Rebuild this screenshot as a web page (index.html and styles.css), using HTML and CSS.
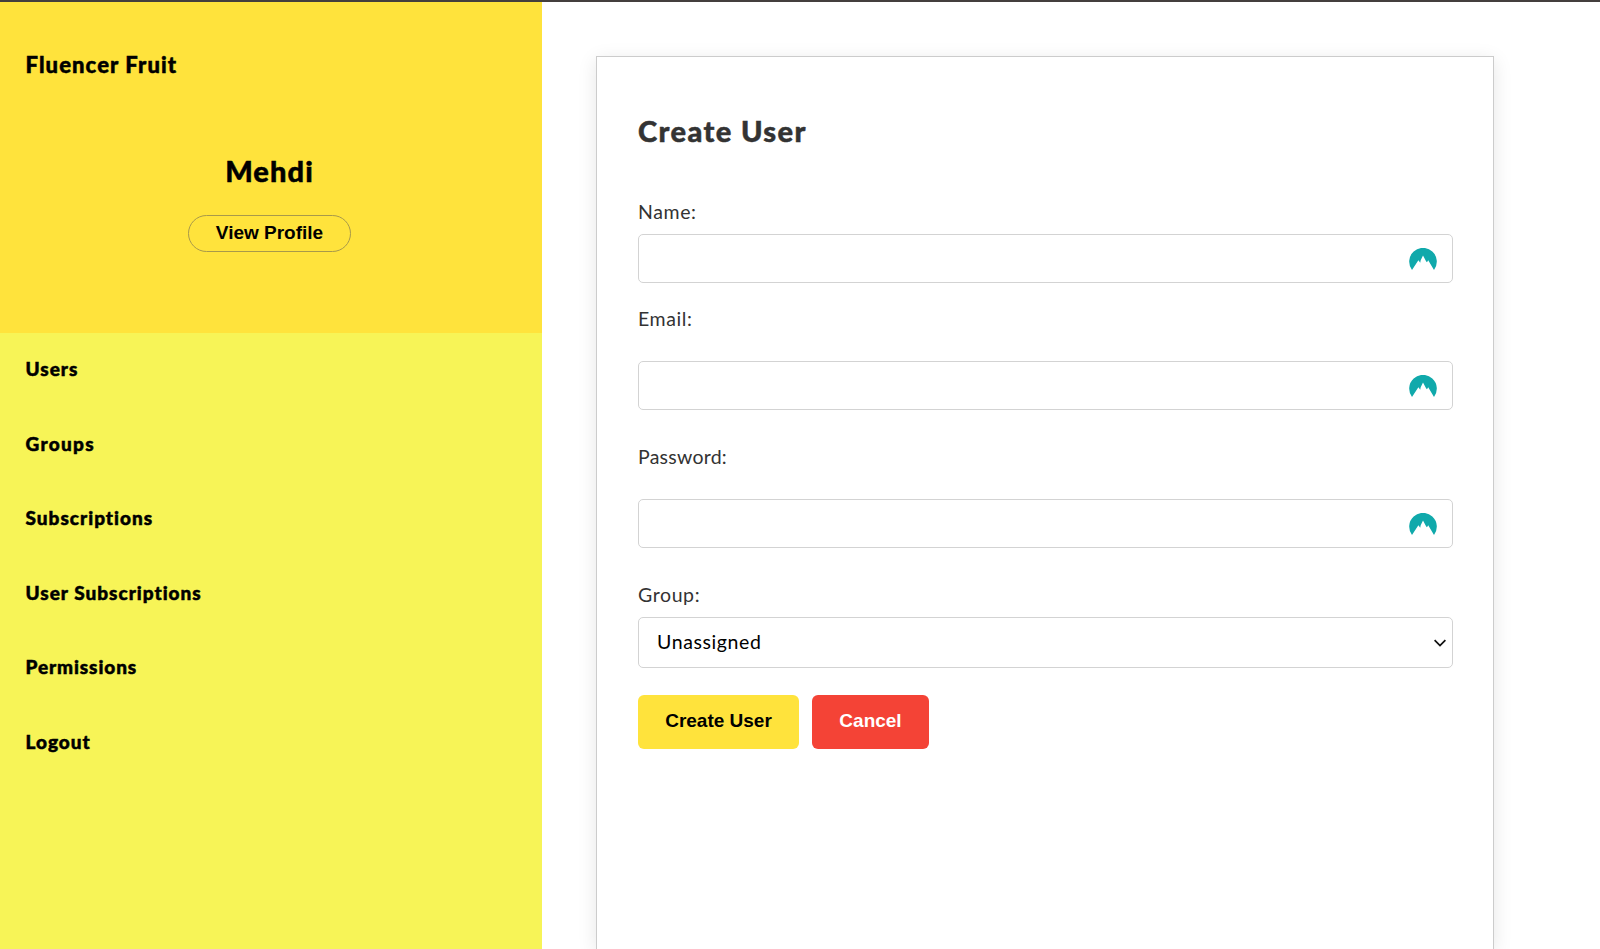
FILE: index.html
```html
<!DOCTYPE html>
<html lang="en">
<head>
<meta charset="utf-8">
<title>Create User</title>
<link rel="stylesheet" href="styles.css">
</head>
<body>
<svg class="defs" width="0" height="0" aria-hidden="true">
  <symbol id="peak" viewBox="0 0 28 22">
    <path d="M3 22A13.8 13.8 0 1 1 25 22L19.2 12.2L18 14.2L17.2 13.6L14 7.6L11.7 12.2L11.2 14.8L9.4 12.2Z"/>
  </symbol>
</svg>
<div class="layout">
  <aside class="sidebar">
    <header class="profile">
      <div class="brand">Fluencer Fruit</div>
      <h2 class="username">Mehdi</h2>
      <button class="view-profile">View Profile</button>
    </header>
    <nav class="menu">
      <a class="users">Users</a>
      <a class="groups">Groups</a>
      <a class="subs">Subscriptions</a>
      <a class="user-subs">User Subscriptions</a>
      <a class="perms">Permissions</a>
      <a class="logout">Logout</a>
    </nav>
  </aside>
  <main class="content">
    <form class="card">
      <h1 class="title">Create User</h1>
      <div class="field name"><label for="name">Name:</label>
        <div class="box"><input id="name" type="text"><svg class="icon"><use href="#peak"/></svg></div></div>
      <div class="field email"><label for="email">Email:</label>
        <div class="box"><input id="email" type="text"><svg class="icon"><use href="#peak"/></svg></div></div>
      <div class="field password"><label for="password">Password:</label>
        <div class="box"><input id="password" type="password"><svg class="icon"><use href="#peak"/></svg></div></div>
      <div class="field group"><label>Group:</label>
        <div class="box select"><span class="value">Unassigned</span><svg class="chevron" viewBox="0 0 12 8"><path d="M0.6 1.2L6 6.6L11.4 1.2"/></svg></div></div>
      <div class="actions">
        <button type="button" class="create">Create User</button>
        <button type="button" class="cancel">Cancel</button>
      </div>
    </form>
  </main>
</div>
</body>
</html>
```
FILE: styles.css
```css
* { box-sizing: border-box; }
body {
  margin: 0;
  height: 949px;
  overflow: hidden;
  border-top: 2px solid #443f3d;
  background: #fff;
  font-family: Lato, sans-serif;
  font-variant-ligatures: none;
  color: #000;
}
.defs { display: none; }
.layout { display: flex; height: 947px; overflow: hidden; }
.sidebar { width: 542px; flex: none; background: #f7f457; }
.profile {
  display: flex;
  flex-direction: column;
  align-items: center;
  height: 331px;
  padding: 45px 3px 0 0;
  background: #ffe33c;
}
.brand {
  align-self: flex-start;
  margin-left: 25.5px;
  font-size: 22px;
  font-weight: 900;
  line-height: 35px;
  letter-spacing: 1.1px;
}
.username {
  margin: 71px 0 0;
  font-size: 29px;
  font-weight: 900;
  line-height: 36px;
  letter-spacing: 1.1px;
}
.brand, .username, .menu a, .title { -webkit-text-stroke: 0.5px currentColor; }
.view-profile {
  width: 163px;
  height: 37px;
  margin-top: 26px;
  padding: 0 0 1px;
  border: 1px solid #a8994a;
  border-radius: 19px;
  background: transparent;
  font: bold 19px/34px "Liberation Sans", sans-serif;
  color: #000;
}
.menu { display: flex; flex-direction: column; padding: 24px 25.5px; }
.menu a {
  height: 74.5px;
  font-size: 19px;
  font-weight: 900;
  line-height: 24px;
  letter-spacing: 1px;
}
.menu .groups { letter-spacing: 1.3px; }
.menu .perms { letter-spacing: 0.9px; }
.content { flex: 1; padding: 54px 106px 0 54px; }
.card {
  height: 893px;
  padding: 56px 40px 0 41px;
  border: 1px solid #ccc;
  border-bottom: 0;
  background: #fff;
  box-shadow: 0 4px 18px rgba(0, 0, 0, 0.1);
  color: #333;
}
.title {
  margin: 0 0 51px;
  font-size: 29px;
  font-weight: 900;
  line-height: 36px;
  letter-spacing: 1.4px;
}
.field { display: flex; flex-direction: column; }
.field label { font-size: 19.5px; line-height: 24px; letter-spacing: 0.6px; }
.name { gap: 10px; }
.email { gap: 30px; margin-top: 24px; }
.password { gap: 30px; margin-top: 35px; }
.field.password label { letter-spacing: 0.25px; }
.password .icon { margin: 1px 0 0; }
.group { gap: 10px; margin-top: 35px; }
.box {
  display: flex;
  align-items: center;
  height: 49px;
  padding-right: 15px;
  border: 1px solid #d3d3d3;
  border-radius: 5px;
}
.box input {
  flex: 1;
  height: 100%;
  padding: 0 18px;
  border: 0;
  outline: 0;
  background: transparent;
  font: 19px Lato, sans-serif;
}
.icon { width: 28px; height: 22px; fill: #10a9ab; }
.select { justify-content: space-between; height: 51px; padding: 0 6px 0 18px; color: #000; }
.value { margin-bottom: 2px; font-size: 19.5px; line-height: 24px; letter-spacing: 0.6px; }
.chevron { width: 12px; height: 8px; fill: none; stroke: #111; stroke-width: 1.8; }
.actions { display: flex; gap: 13px; margin-top: 27px; }
.actions button {
  height: 54px;
  padding: 0 0 2px;
  border: 0;
  border-radius: 6px;
  font: bold 19px/52px "Liberation Sans", sans-serif;
}
.create { width: 161px; background: #ffe33c; color: #000; }
.cancel { width: 117px; background: #f44336; color: #fff; }
```
